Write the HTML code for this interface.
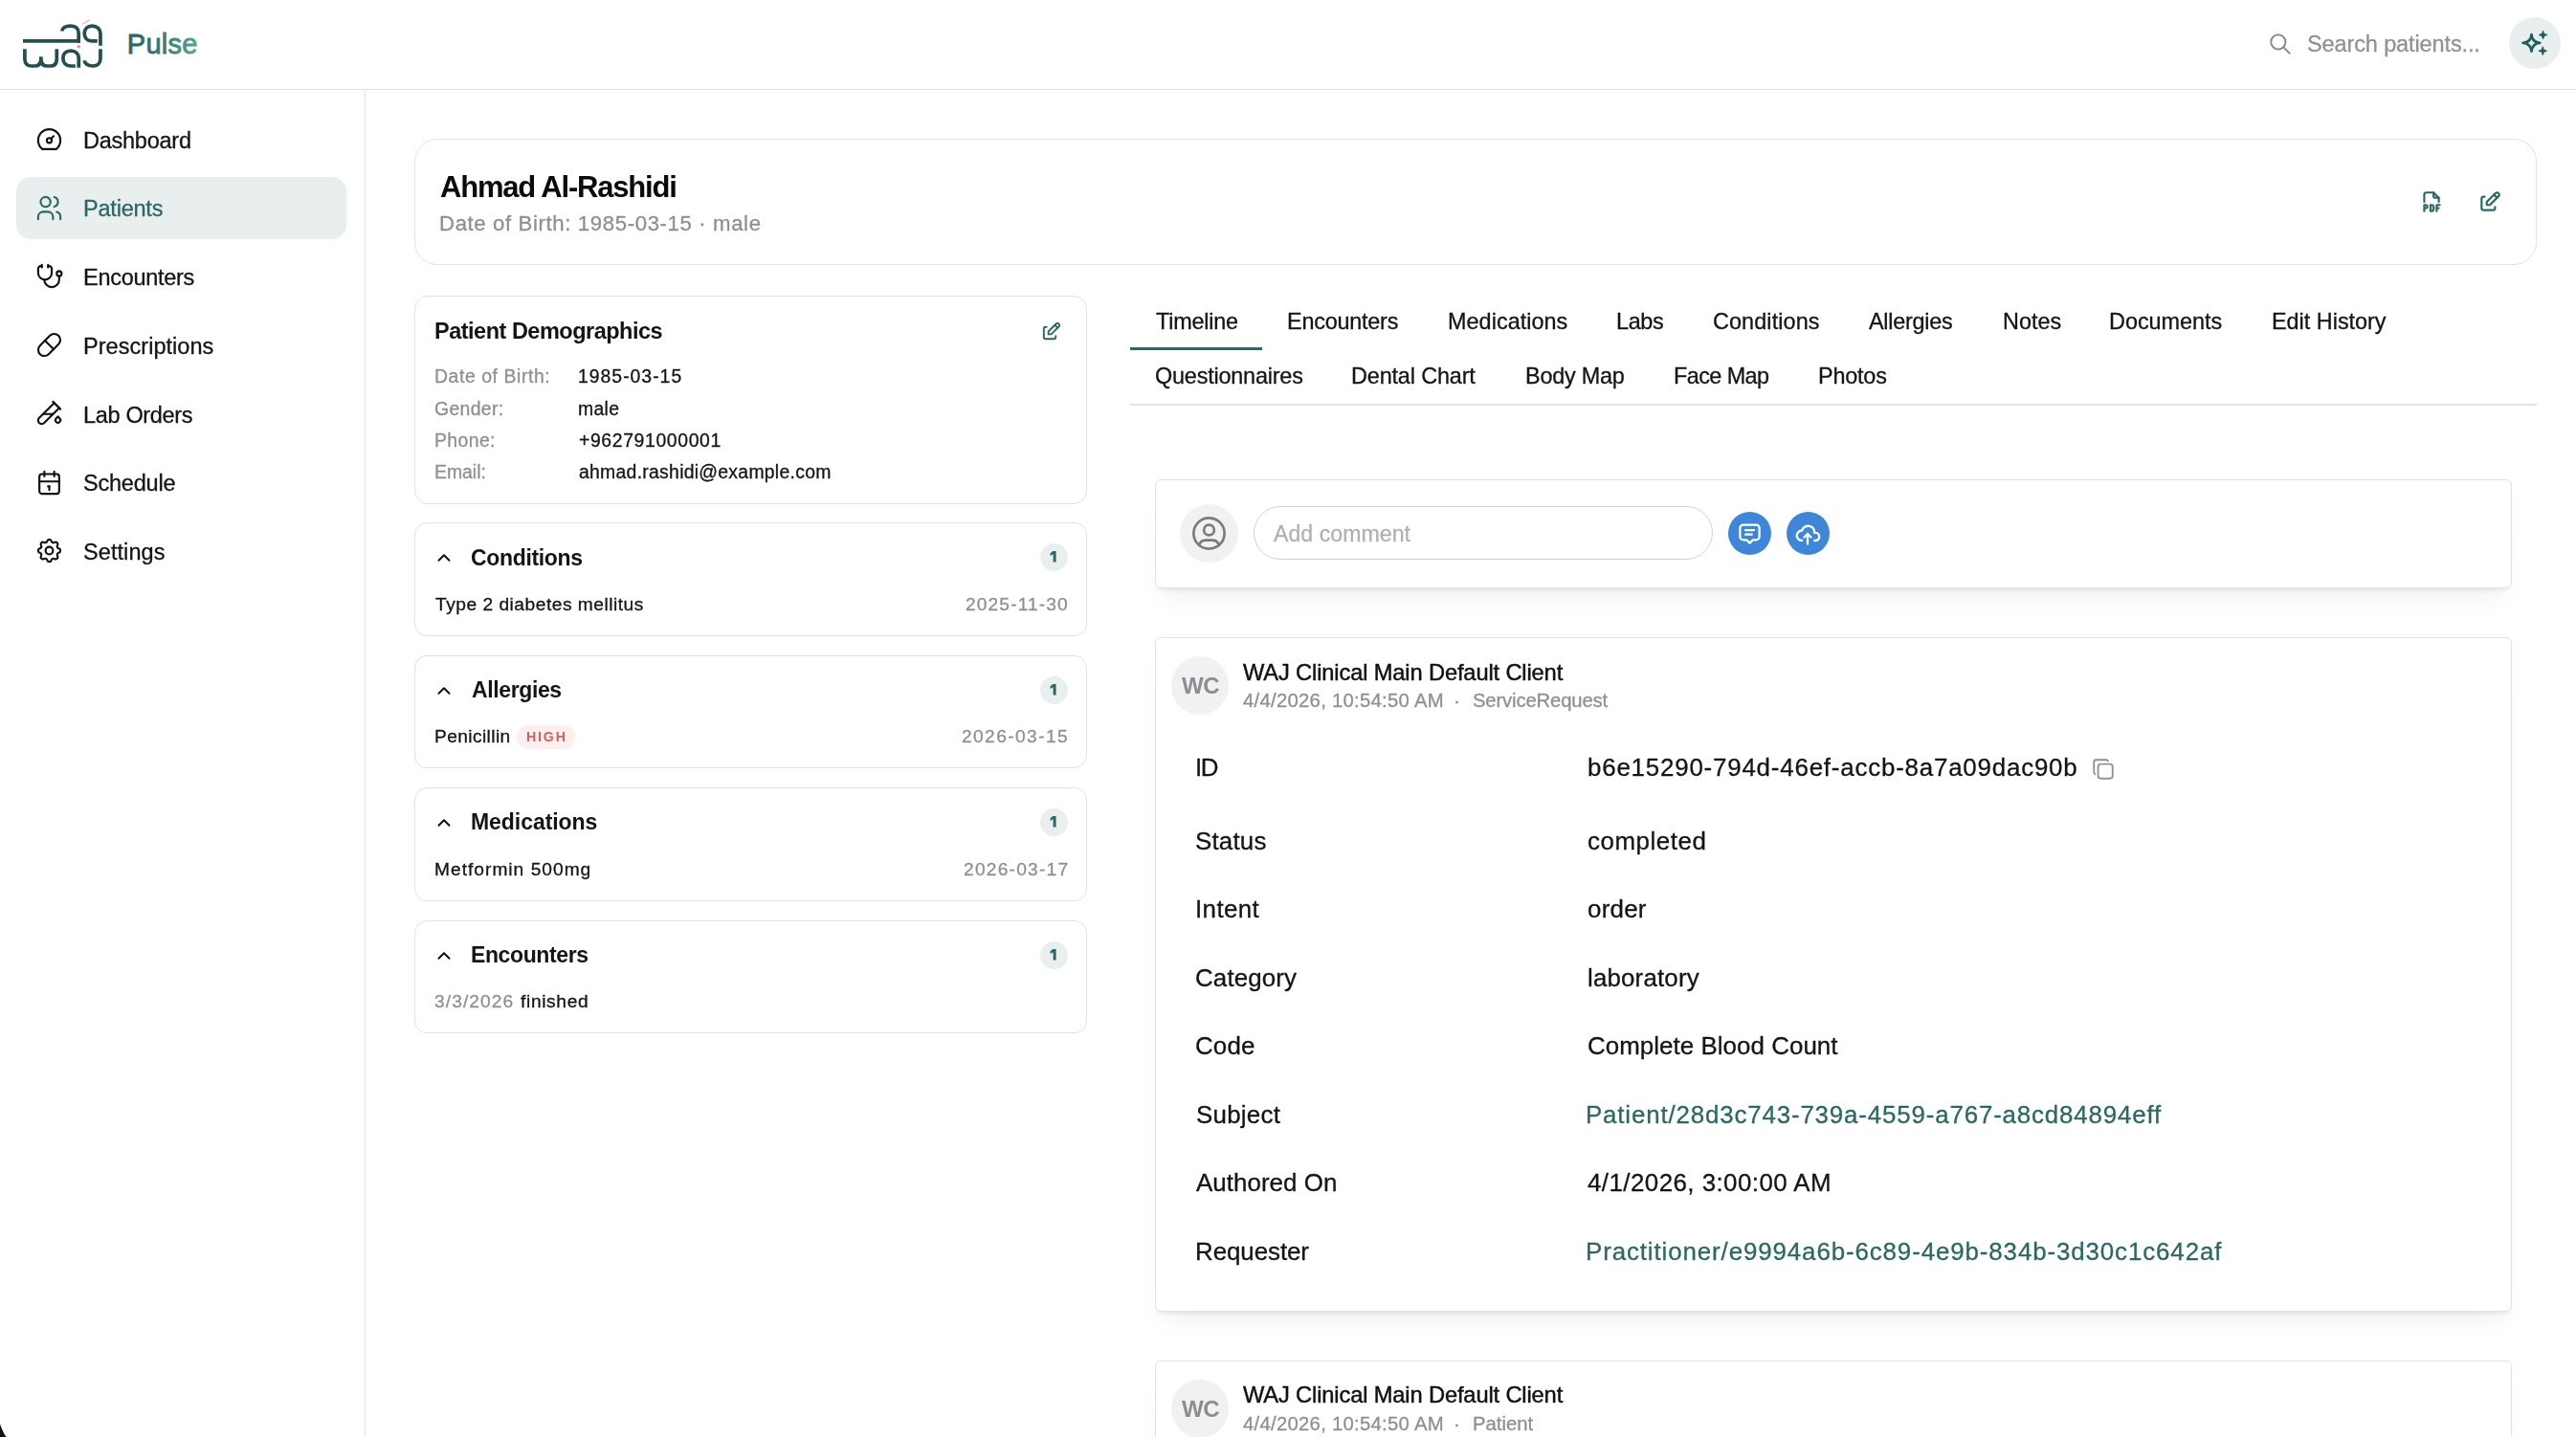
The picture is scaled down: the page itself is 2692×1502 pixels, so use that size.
<!DOCTYPE html>
<html><head><meta charset="utf-8"><title>Pulse</title><style>
*{box-sizing:border-box;margin:0;padding:0}
html,body{width:2692px;height:1502px;overflow:hidden;background:#fff}
body{position:relative;font-family:"Liberation Sans",sans-serif}
.abs,.t,.ic,.card{position:absolute}
.t{white-space:nowrap;will-change:transform}
.card{background:#fff;border:1px solid #e1e2e4}
.shadow{box-shadow:0 5px 5px -3px rgba(0,0,0,0.08),0 18px 28px -12px rgba(0,0,0,0.08)}
.badge{border-radius:50%;background:#e9efef;color:#2b6864;font-weight:700;font-size:17px;line-height:29px;text-align:center}
</style></head>
<body>
<div class="abs" style="left:0;top:93px;width:2692px;height:1px;background:#e0e2e4"></div>
<div class="abs" style="left:381px;top:94px;width:1px;height:1408px;background:#e0e2e4"></div>
<div class="abs" style="left:17px;top:185px;width:345px;height:65px;border-radius:15px;background:#e9eeef"></div>
<svg class="ic" style="left:16px;top:14px;width:100px;height:64px" viewBox="0 0 2245 1437" fill="none" stroke="#234f50" stroke-width="84" stroke-linecap="butt">
<path d="M180 650H1525"/>
<path d="M1100 418C1100 340 1180 292 1290 292C1410 292 1485 360 1485 450V690"/>
<path d="M1925 650H1800C1690 650 1622 570 1622 470C1622 360 1700 292 1800 292C1920 292 1997 370 1997 470V755"/>
<path d="M222 835V1070C222 1175 285 1235 380 1235H440C545 1235 602 1175 602 1070V1015"/>
<path d="M602 1070C602 1175 660 1235 760 1235H815C915 1235 972 1175 972 1070V835"/>
<path d="M1410 1235H1300C1190 1235 1120 1160 1120 1050C1120 940 1190 878 1300 878C1420 878 1488 950 1488 1050V1275"/>
<path d="M1997 835V1060C1997 1170 1930 1235 1820 1235C1700 1235 1622 1170 1622 1105"/>
<path d="M1575 255L1745 150" stroke="#e3909a" stroke-width="22"/>
<circle cx="1485" cy="780" r="38" fill="#e88f9a" stroke="none"/>
</svg>
<svg class="ic" style="left:120px;top:20px;width:100px;height:50px;overflow:visible" viewBox="0 0 100 50"><defs><linearGradient id="pg" x1="0" y1="0" x2="1" y2="0"><stop offset="0" stop-color="#29645f"/><stop offset="0.5" stop-color="#337c72"/><stop offset="1" stop-color="#52aa8d"/></linearGradient></defs><text x="12.8" y="36" font-family="Liberation Sans" font-size="29" letter-spacing="0.25" fill="url(#pg)" stroke="url(#pg)" stroke-width="0.85">Pulse</text></svg>
<svg class="ic" style="left:2369.70px;top:32.80px;width:26.00px;height:26.00px;" viewBox="0 0 24 24" fill="none" stroke="#8a8e93" stroke-width="1.85" stroke-linecap="round" stroke-linejoin="round"><path d="M10 10m-7 0a7 7 0 1 0 14 0a7 7 0 1 0 -14 0"/><path d="M21 21l-6 -6"/></svg>
<div class="abs" style="left:2622px;top:18px;width:54px;height:54px;border-radius:50%;background:#e9eeee"></div>
<svg class="ic" style="left:2622px;top:18px;width:54px;height:54px" viewBox="0 0 54 54" fill="none" stroke="#22605b" stroke-linejoin="round"><path stroke-width="2.9" d="M23.5 35.6A8.7 8.7 0 0 1 32.2 26.9A8.7 8.7 0 0 1 23.5 18.2A8.7 8.7 0 0 1 14.8 26.9A8.7 8.7 0 0 1 23.5 35.6Z"/><path fill="#22605b" stroke-width="1.6" d="M35.6 22.3A3.8 3.8 0 0 1 39.4 18.5A3.8 3.8 0 0 1 35.6 14.7A3.8 3.8 0 0 1 31.8 18.5A3.8 3.8 0 0 1 35.6 22.3Z"/><path fill="#22605b" stroke-width="1.6" d="M35.3 39A3.8 3.8 0 0 1 39.1 35.2A3.8 3.8 0 0 1 35.3 31.4A3.8 3.8 0 0 1 31.5 35.2A3.8 3.8 0 0 1 35.3 39Z"/></svg>
<svg class="ic" style="left:36.10px;top:129.90px;width:31.00px;height:31.00px;" viewBox="0 0 24 24" fill="none" stroke="#111" stroke-width="1.65" stroke-linecap="round" stroke-linejoin="round"><path d="M12 13m-2 0a2 2 0 1 0 4 0a2 2 0 1 0 -4 0"/><path d="M13.45 11.55l2.05 -2.05"/><path d="M6.4 20a9 9 0 1 1 11.2 0z"/></svg>
<svg class="ic" style="left:36.10px;top:201.65px;width:31.00px;height:31.00px;" viewBox="0 0 24 24" fill="none" stroke="#2b6864" stroke-width="1.65" stroke-linecap="round" stroke-linejoin="round"><path d="M9 7m-4 0a4 4 0 1 0 8 0a4 4 0 1 0 -8 0"/><path d="M3 21v-2a4 4 0 0 1 4 -4h4a4 4 0 0 1 4 4v2"/><path d="M16 3.13a4 4 0 0 1 0 7.75"/><path d="M21 21v-2a4 4 0 0 0 -3 -3.85"/></svg>
<svg class="ic" style="left:36.10px;top:273.40px;width:31.00px;height:31.00px;" viewBox="0 0 24 24" fill="none" stroke="#111" stroke-width="1.65" stroke-linecap="round" stroke-linejoin="round"><path d="M6 4h-1a2 2 0 0 0 -2 2v3.5h0a5.5 5.5 0 0 0 11 0v-3.5a2 2 0 0 0 -2 -2h-1"/><path d="M8 15a6 6 0 1 0 12 0v-3"/><path d="M11 3v2"/><path d="M6 3v2"/><path d="M20 10m-2 0a2 2 0 1 0 4 0a2 2 0 1 0 -4 0"/></svg>
<svg class="ic" style="left:36.10px;top:345.15px;width:31.00px;height:31.00px;" viewBox="0 0 24 24" fill="none" stroke="#111" stroke-width="1.65" stroke-linecap="round" stroke-linejoin="round"><path d="M4.5 12.5l8 -8a4.95 4.95 0 0 1 7 7l-8 8a4.95 4.95 0 0 1 -7 -7"/><path d="M8.5 8.5l7 7"/></svg>
<svg class="ic" style="left:36.10px;top:415.70px;width:31.00px;height:31.00px;" viewBox="0 0 24 24" fill="none" stroke="#111" stroke-width="1.65" stroke-linecap="round" stroke-linejoin="round"><path d="M20 8.04l-12.122 12.124a2.857 2.857 0 1 1 -4.041 -4.04l12.122 -12.124"/><path d="M7 13h8"/><path d="M19 15l1.5 1.6a2 2 0 1 1 -3 0l1.5 -1.6z"/><path d="M15 3l6 6"/></svg>
<svg class="ic" style="left:36.10px;top:488.65px;width:31.00px;height:31.00px;" viewBox="0 0 24 24" fill="none" stroke="#111" stroke-width="1.65" stroke-linecap="round" stroke-linejoin="round"><path d="M4 7a2 2 0 0 1 2 -2h12a2 2 0 0 1 2 2v12a2 2 0 0 1 -2 2h-12a2 2 0 0 1 -2 -2v-12z"/><path d="M16 3v4"/><path d="M8 3v4"/><path d="M4 11h16"/><path d="M11 15h1"/><path d="M12 15v3"/></svg>
<svg class="ic" style="left:36.10px;top:560.40px;width:31.00px;height:31.00px;" viewBox="0 0 24 24" fill="none" stroke="#111" stroke-width="1.65" stroke-linecap="round" stroke-linejoin="round"><path d="M10.325 4.317c.426 -1.756 2.924 -1.756 3.35 0a1.724 1.724 0 0 0 2.573 1.066c1.543 -.94 3.31 .826 2.37 2.37a1.724 1.724 0 0 0 1.065 2.572c1.756 .426 1.756 2.924 0 3.35a1.724 1.724 0 0 0 -1.066 2.573c.94 1.543 -.826 3.31 -2.37 2.37a1.724 1.724 0 0 0 -2.572 1.065c-.426 1.756 -2.924 1.756 -3.35 0a1.724 1.724 0 0 0 -2.573 -1.066c-1.543 .94 -3.31 -.826 -2.37 -2.37a1.724 1.724 0 0 0 -1.065 -2.572c-1.756 -.426 -1.756 -2.924 0 -3.35a1.724 1.724 0 0 0 1.066 -2.573c-.94 -1.543 .826 -3.31 2.37 -2.37c1 .608 2.296 .07 2.572 -1.065z"/><path d="M9 12a3 3 0 1 0 6 0a3 3 0 0 0 -6 0"/></svg>
<div class="card" style="left:433px;top:145px;width:2218px;height:132px;border-radius:24px"></div>
<svg class="ic" style="left:2528.00px;top:197.50px;width:26.00px;height:26.00px;" viewBox="0 0 24 24" fill="none" stroke="#2b6864" stroke-width="2" stroke-linecap="round" stroke-linejoin="round"><path d="M14 3v4a1 1 0 0 0 1 1h4"/><path d="M5 12v-7a2 2 0 0 1 2 -2h7l5 5v4"/><path d="M5 18h1.5a1.5 1.5 0 0 0 0 -3h-1.5v6"/><path d="M17 18h2"/><path d="M20 15h-3v6"/><path d="M11 15v6h1a2 2 0 0 0 2 -2v-2a2 2 0 0 0 -2 -2h-1z"/></svg>
<svg class="ic" style="left:2588.50px;top:197.80px;width:26.00px;height:26.00px;" viewBox="0 0 24 24" fill="none" stroke="#2b6864" stroke-width="2" stroke-linecap="round" stroke-linejoin="round"><path d="M7 7h-1a2 2 0 0 0 -2 2v9a2 2 0 0 0 2 2h9a2 2 0 0 0 2 -2v-1"/><path d="M20.385 6.585a2.1 2.1 0 0 0 -2.97 -2.97l-8.415 8.385v3h3l8.385 -8.415z"/><path d="M16 5l3 3"/></svg>
<div class="card" style="left:433px;top:309px;width:703px;height:218px;border-radius:14px"></div>
<svg class="ic" style="left:1086.50px;top:335.30px;width:23.00px;height:23.00px;" viewBox="0 0 24 24" fill="none" stroke="#2b6864" stroke-width="2" stroke-linecap="round" stroke-linejoin="round"><path d="M7 7h-1a2 2 0 0 0 -2 2v9a2 2 0 0 0 2 2h9a2 2 0 0 0 2 -2v-1"/><path d="M20.385 6.585a2.1 2.1 0 0 0 -2.97 -2.97l-8.415 8.385v3h3l8.385 -8.415z"/><path d="M16 5l3 3"/></svg>
<div class="card" style="left:433px;top:546.0px;width:703px;height:118.5px;border-radius:13px"></div>
<svg class="ic" style="left:452.50px;top:572.00px;width:22.00px;height:22.00px;" viewBox="0 0 24 24" fill="none" stroke="#111" stroke-width="2.2" stroke-linecap="round" stroke-linejoin="round"><path d="M6 15l6 -6l6 6"/></svg>
<div class="abs badge" style="left:1087.4px;top:568.2px;width:29px;height:29px"><svg width="29" height="29" viewBox="0 0 29 29" style="display:block"><path d="M13.3 7.9H16.6V19.6H13.6V11.2L10.6 13.1V10.2Z" fill="#2b6864"/></svg></div>
<div class="card" style="left:433px;top:684.5px;width:703px;height:118.5px;border-radius:13px"></div>
<svg class="ic" style="left:452.50px;top:710.50px;width:22.00px;height:22.00px;" viewBox="0 0 24 24" fill="none" stroke="#111" stroke-width="2.2" stroke-linecap="round" stroke-linejoin="round"><path d="M6 15l6 -6l6 6"/></svg>
<div class="abs badge" style="left:1087.4px;top:706.7px;width:29px;height:29px"><svg width="29" height="29" viewBox="0 0 29 29" style="display:block"><path d="M13.3 7.9H16.6V19.6H13.6V11.2L10.6 13.1V10.2Z" fill="#2b6864"/></svg></div>
<div class="card" style="left:433px;top:823.0px;width:703px;height:118.5px;border-radius:13px"></div>
<svg class="ic" style="left:452.50px;top:849.00px;width:22.00px;height:22.00px;" viewBox="0 0 24 24" fill="none" stroke="#111" stroke-width="2.2" stroke-linecap="round" stroke-linejoin="round"><path d="M6 15l6 -6l6 6"/></svg>
<div class="abs badge" style="left:1087.4px;top:845.2px;width:29px;height:29px"><svg width="29" height="29" viewBox="0 0 29 29" style="display:block"><path d="M13.3 7.9H16.6V19.6H13.6V11.2L10.6 13.1V10.2Z" fill="#2b6864"/></svg></div>
<div class="card" style="left:433px;top:961.5px;width:703px;height:118.5px;border-radius:13px"></div>
<svg class="ic" style="left:452.50px;top:987.50px;width:22.00px;height:22.00px;" viewBox="0 0 24 24" fill="none" stroke="#111" stroke-width="2.2" stroke-linecap="round" stroke-linejoin="round"><path d="M6 15l6 -6l6 6"/></svg>
<div class="abs badge" style="left:1087.4px;top:983.7px;width:29px;height:29px"><svg width="29" height="29" viewBox="0 0 29 29" style="display:block"><path d="M13.3 7.9H16.6V19.6H13.6V11.2L10.6 13.1V10.2Z" fill="#2b6864"/></svg></div>
<div class="abs" style="left:540.4px;top:757.6px;width:61px;height:25px;border-radius:12px;background:#fcefef"></div>
<div class="abs" style="left:1181px;top:422px;width:1470px;height:2px;background:#e2e5e7"></div>
<div class="abs" style="left:1181px;top:362.8px;width:137.8px;height:3.2px;background:#2b6864"></div>
<div class="card shadow" style="left:1207.3px;top:501.2px;width:1418px;height:113.5px;border-radius:6px"></div>
<div class="abs" style="left:1233.2px;top:527px;width:61px;height:61px;border-radius:50%;background:#f1f1f1"></div>
<svg class="ic" style="left:1242.20px;top:535.90px;width:43.00px;height:43.00px;" viewBox="0 0 24 24" fill="none" stroke="#7b7b7b" stroke-width="1.5" stroke-linecap="round" stroke-linejoin="round"><path d="M12 12m-9 0a9 9 0 1 0 18 0a9 9 0 1 0 -18 0"/><path d="M12 10m-3 0a3 3 0 1 0 6 0a3 3 0 1 0 -6 0"/><path d="M6.168 18.849a4 4 0 0 1 3.832 -2.849h4a4 4 0 0 1 3.834 2.855"/></svg>
<div class="abs" style="left:1310px;top:529.3px;width:480px;height:56px;border-radius:28px;border:1.5px solid #cfd2d5;background:#fff"></div>
<div class="abs" style="left:1806.2px;top:534.7px;width:45px;height:45px;border-radius:50%;background:#3d86d9"></div>
<svg class="ic" style="left:1815.20px;top:543.70px;width:27.00px;height:27.00px;" viewBox="0 0 24 24" fill="none" stroke="#fff" stroke-width="2" stroke-linecap="round" stroke-linejoin="round"><path d="M8 9h8"/><path d="M8 13h6"/><path d="M9 18h-3a3 3 0 0 1 -3 -3v-8a3 3 0 0 1 3 -3h12a3 3 0 0 1 3 3v8a3 3 0 0 1 -3 3h-3l-3 3l-3 -3z"/></svg>
<div class="abs" style="left:1866.9px;top:534.7px;width:45px;height:45px;border-radius:50%;background:#3d86d9"></div>
<svg class="ic" style="left:1875.40px;top:543.70px;width:28.00px;height:28.00px;" viewBox="0 0 24 24" fill="none" stroke="#fff" stroke-width="2" stroke-linecap="round" stroke-linejoin="round"><path d="M7 18a4.6 4.4 0 0 1 0 -9a5 4.5 0 0 1 11 2h1a3.5 3.5 0 0 1 0 7h-1"/><path d="M9 15l3 -3l3 3"/><path d="M12 12l0 9"/></svg>
<div class="card shadow" style="left:1207.3px;top:666px;width:1418px;height:705px;border-radius:6px"></div>
<div class="abs" style="left:1223.6px;top:686px;width:60.5px;height:60.5px;border-radius:50%;background:#f1f1f1"></div>
<svg class="ic" style="left:2185.00px;top:790.80px;width:26.00px;height:26.00px;" viewBox="0 0 24 24" fill="none" stroke="#8f9398" stroke-width="1.75" stroke-linecap="round" stroke-linejoin="round"><path d="M7 9.667a2.667 2.667 0 0 1 2.667 -2.667h8.666a2.667 2.667 0 0 1 2.667 2.667v8.666a2.667 2.667 0 0 1 -2.667 2.667h-8.666a2.667 2.667 0 0 1 -2.667 -2.667z"/><path d="M4.012 16.737a2.005 2.005 0 0 1 -1.012 -1.737v-10c0 -1.1 .9 -2 2 -2h10c.75 0 1.158 .385 1.5 1"/></svg>
<div class="card shadow" style="left:1207.3px;top:1422px;width:1418px;height:200px;border-radius:6px"></div>
<div class="abs" style="left:1223.6px;top:1442px;width:60.5px;height:60.5px;border-radius:50%;background:#f1f1f1"></div>
<svg class="ic" style="left:0;top:1480px;width:20px;height:22px" viewBox="0 0 20 22"><path d="M0 8.5C2 14 4 18.5 6.5 22H0Z" fill="#111"/></svg>
<div id="search" class="t" style="left:2411.40px;top:34.81px;font-size:23.50px;line-height:23.50px;font-weight:400;color:#8e9297;letter-spacing:-0.118px;-webkit-text-stroke:0.30px #8e9297;">Search patients...</div>
<div id="nav0" class="t" style="left:87.20px;top:135.61px;font-size:23.50px;line-height:23.50px;font-weight:400;color:#141414;letter-spacing:-0.250px;-webkit-text-stroke:0.30px #141414;">Dashboard</div>
<div id="nav1" class="t" style="left:87.20px;top:207.36px;font-size:23.50px;line-height:23.50px;font-weight:400;color:#2b6864;letter-spacing:-0.215px;-webkit-text-stroke:0.30px #2b6864;">Patients</div>
<div id="nav2" class="t" style="left:87.20px;top:279.11px;font-size:23.50px;line-height:23.50px;font-weight:400;color:#141414;letter-spacing:-0.278px;-webkit-text-stroke:0.30px #141414;">Encounters</div>
<div id="nav3" class="t" style="left:87.20px;top:350.86px;font-size:23.50px;line-height:23.50px;font-weight:400;color:#141414;letter-spacing:0.041px;-webkit-text-stroke:0.30px #141414;">Prescriptions</div>
<div id="nav4" class="t" style="left:87.20px;top:422.61px;font-size:23.50px;line-height:23.50px;font-weight:400;color:#141414;letter-spacing:-0.332px;-webkit-text-stroke:0.30px #141414;">Lab Orders</div>
<div id="nav5" class="t" style="left:87.20px;top:494.36px;font-size:23.50px;line-height:23.50px;font-weight:400;color:#141414;letter-spacing:-0.215px;-webkit-text-stroke:0.30px #141414;">Schedule</div>
<div id="nav6" class="t" style="left:87.20px;top:566.11px;font-size:23.50px;line-height:23.50px;font-weight:400;color:#141414;letter-spacing:0.073px;-webkit-text-stroke:0.30px #141414;">Settings</div>
<div id="name" class="t" style="left:460.00px;top:180.46px;font-size:31.00px;line-height:31.00px;font-weight:700;color:#0b0b0b;letter-spacing:-1.201px;">Ahmad Al-Rashidi</div>
<div id="dob" class="t" style="left:459.00px;top:223.21px;font-size:22.20px;line-height:22.20px;font-weight:400;color:#8c9095;letter-spacing:0.614px;-webkit-text-stroke:0.30px #8c9095;">Date of Birth: 1985-03-15 · male</div>
<div id="demo_t" class="t" style="left:453.50px;top:334.81px;font-size:23.50px;line-height:23.50px;font-weight:700;color:#141414;letter-spacing:-0.499px;">Patient Demographics</div>
<div id="dl0" class="t" style="left:453.50px;top:383.98px;font-size:19.40px;line-height:19.40px;font-weight:400;color:#8c9095;letter-spacing:0.576px;-webkit-text-stroke:0.30px #8c9095;">Date of Birth:</div>
<div id="dv0" class="t" style="left:603.70px;top:383.98px;font-size:19.40px;line-height:19.40px;font-weight:400;color:#141414;letter-spacing:0.998px;-webkit-text-stroke:0.30px #141414;">1985-03-15</div>
<div id="dl1" class="t" style="left:453.50px;top:417.68px;font-size:19.40px;line-height:19.40px;font-weight:400;color:#8c9095;letter-spacing:0.333px;-webkit-text-stroke:0.30px #8c9095;">Gender:</div>
<div id="dv1" class="t" style="left:603.70px;top:417.68px;font-size:19.40px;line-height:19.40px;font-weight:400;color:#141414;letter-spacing:0.333px;-webkit-text-stroke:0.30px #141414;">male</div>
<div id="dl2" class="t" style="left:453.50px;top:450.58px;font-size:19.40px;line-height:19.40px;font-weight:400;color:#8c9095;letter-spacing:0.400px;-webkit-text-stroke:0.30px #8c9095;">Phone:</div>
<div id="dv2" class="t" style="left:604.70px;top:450.58px;font-size:19.40px;line-height:19.40px;font-weight:400;color:#141414;letter-spacing:0.626px;-webkit-text-stroke:0.30px #141414;">+962791000001</div>
<div id="dl3" class="t" style="left:453.50px;top:483.78px;font-size:19.40px;line-height:19.40px;font-weight:400;color:#8c9095;letter-spacing:0.000px;-webkit-text-stroke:0.30px #8c9095;">Email:</div>
<div id="dv3" class="t" style="left:604.70px;top:483.78px;font-size:19.40px;line-height:19.40px;font-weight:400;color:#141414;letter-spacing:0.273px;-webkit-text-stroke:0.30px #141414;">ahmad.rashidi@example.com</div>
<div id="st0" class="t" style="left:491.80px;top:572.33px;font-size:23.00px;line-height:23.00px;font-weight:700;color:#141414;letter-spacing:-0.334px;">Conditions</div>
<div id="st1" class="t" style="left:492.80px;top:709.63px;font-size:23.00px;line-height:23.00px;font-weight:700;color:#141414;letter-spacing:-0.375px;">Allergies</div>
<div id="st2" class="t" style="left:491.80px;top:848.23px;font-size:23.00px;line-height:23.00px;font-weight:700;color:#141414;letter-spacing:-0.050px;">Medications</div>
<div id="st3" class="t" style="left:491.80px;top:986.53px;font-size:23.00px;line-height:23.00px;font-weight:700;color:#141414;letter-spacing:-0.389px;">Encounters</div>
<div id="si0" class="t" style="left:454.50px;top:621.95px;font-size:19.20px;line-height:19.20px;font-weight:400;color:#141414;letter-spacing:0.500px;-webkit-text-stroke:0.30px #141414;">Type 2 diabetes mellitus</div>
<div id="sd0" class="t" style="left:1008.90px;top:621.95px;font-size:19.20px;line-height:19.20px;font-weight:400;color:#8c9095;letter-spacing:1.113px;-webkit-text-stroke:0.30px #8c9095;">2025-11-30</div>
<div id="si1" class="t" style="left:453.50px;top:760.15px;font-size:19.20px;line-height:19.20px;font-weight:400;color:#141414;letter-spacing:0.390px;-webkit-text-stroke:0.30px #141414;">Penicillin</div>
<div id="high" class="t" style="left:549.50px;top:763.28px;font-size:14.20px;line-height:14.20px;font-weight:700;color:#d9605c;letter-spacing:1.832px;">HIGH</div>
<div id="sd1" class="t" style="left:1005.00px;top:760.15px;font-size:19.20px;line-height:19.20px;font-weight:400;color:#8c9095;letter-spacing:1.390px;-webkit-text-stroke:0.30px #8c9095;">2026-03-15</div>
<div id="si2" class="t" style="left:453.50px;top:898.55px;font-size:19.20px;line-height:19.20px;font-weight:400;color:#141414;letter-spacing:1.000px;-webkit-text-stroke:0.30px #141414;">Metformin 500mg</div>
<div id="sd2" class="t" style="left:1006.50px;top:898.55px;font-size:19.20px;line-height:19.20px;font-weight:400;color:#8c9095;letter-spacing:1.224px;-webkit-text-stroke:0.30px #8c9095;">2026-03-17</div>
<div id="si3a" class="t" style="left:453.50px;top:1037.05px;font-size:19.20px;line-height:19.20px;font-weight:400;color:#8c9095;letter-spacing:1.070px;-webkit-text-stroke:0.30px #8c9095;">3/3/2026</div>
<div id="si3b" class="t" style="left:544.00px;top:1037.05px;font-size:19.20px;line-height:19.20px;font-weight:400;color:#141414;letter-spacing:0.643px;-webkit-text-stroke:0.30px #141414;">finished</div>
<div id="tab1_0" class="t" style="left:1207.50px;top:324.79px;font-size:23.40px;line-height:23.40px;font-weight:400;color:#141414;letter-spacing:-0.215px;-webkit-text-stroke:0.30px #141414;">Timeline</div>
<div id="tab1_1" class="t" style="left:1344.70px;top:324.79px;font-size:23.40px;line-height:23.40px;font-weight:400;color:#141414;letter-spacing:-0.222px;-webkit-text-stroke:0.30px #141414;">Encounters</div>
<div id="tab1_2" class="t" style="left:1512.90px;top:324.79px;font-size:23.40px;line-height:23.40px;font-weight:400;color:#141414;letter-spacing:0.050px;-webkit-text-stroke:0.30px #141414;">Medications</div>
<div id="tab1_3" class="t" style="left:1688.90px;top:324.79px;font-size:23.40px;line-height:23.40px;font-weight:400;color:#141414;letter-spacing:-0.334px;-webkit-text-stroke:0.30px #141414;">Labs</div>
<div id="tab1_4" class="t" style="left:1789.80px;top:324.79px;font-size:23.40px;line-height:23.40px;font-weight:400;color:#141414;letter-spacing:0.112px;-webkit-text-stroke:0.30px #141414;">Conditions</div>
<div id="tab1_5" class="t" style="left:1953.20px;top:324.79px;font-size:23.40px;line-height:23.40px;font-weight:400;color:#141414;letter-spacing:-0.250px;-webkit-text-stroke:0.30px #141414;">Allergies</div>
<div id="tab1_6" class="t" style="left:2092.50px;top:324.79px;font-size:23.40px;line-height:23.40px;font-weight:400;color:#141414;letter-spacing:-0.000px;-webkit-text-stroke:0.30px #141414;">Notes</div>
<div id="tab1_7" class="t" style="left:2203.80px;top:324.79px;font-size:23.40px;line-height:23.40px;font-weight:400;color:#141414;letter-spacing:-0.000px;-webkit-text-stroke:0.30px #141414;">Documents</div>
<div id="tab1_8" class="t" style="left:2374.00px;top:324.79px;font-size:23.40px;line-height:23.40px;font-weight:400;color:#141414;letter-spacing:-0.002px;-webkit-text-stroke:0.30px #141414;">Edit History</div>
<div id="tab2_0" class="t" style="left:1206.50px;top:381.79px;font-size:23.40px;line-height:23.40px;font-weight:400;color:#141414;letter-spacing:-0.192px;-webkit-text-stroke:0.30px #141414;">Questionnaires</div>
<div id="tab2_1" class="t" style="left:1412.40px;top:381.79px;font-size:23.40px;line-height:23.40px;font-weight:400;color:#141414;letter-spacing:-0.135px;-webkit-text-stroke:0.30px #141414;">Dental Chart</div>
<div id="tab2_2" class="t" style="left:1593.70px;top:381.79px;font-size:23.40px;line-height:23.40px;font-weight:400;color:#141414;letter-spacing:-0.214px;-webkit-text-stroke:0.30px #141414;">Body Map</div>
<div id="tab2_3" class="t" style="left:1748.90px;top:381.79px;font-size:23.40px;line-height:23.40px;font-weight:400;color:#141414;letter-spacing:-0.572px;-webkit-text-stroke:0.30px #141414;">Face Map</div>
<div id="tab2_4" class="t" style="left:1900.00px;top:381.79px;font-size:23.40px;line-height:23.40px;font-weight:400;color:#141414;letter-spacing:-0.200px;-webkit-text-stroke:0.30px #141414;">Photos</div>
<div id="addc" class="t" style="left:1331.00px;top:546.95px;font-size:23.10px;line-height:23.10px;font-weight:400;color:#aeb1b5;letter-spacing:0.050px;-webkit-text-stroke:0.30px #aeb1b5;">Add comment</div>
<div id="wc1" class="t" style="left:1234.60px;top:704.90px;font-size:24.10px;line-height:24.10px;font-weight:700;color:#8a8e93;letter-spacing:-0.500px;">WC</div>
<div id="tt1" class="t" style="left:1298.50px;top:691.54px;font-size:23.70px;line-height:23.70px;font-weight:400;color:#111;letter-spacing:-0.146px;-webkit-text-stroke:0.45px #111;">WAJ Clinical Main Default Client</div>
<div id="ts1a" class="t" style="left:1298.50px;top:722.32px;font-size:20.30px;line-height:20.30px;font-weight:400;color:#8c9095;letter-spacing:0.275px;-webkit-text-stroke:0.30px #8c9095;">4/4/2026, 10:54:50 AM</div>
<div id="ts1dot" class="t" style="left:1519.40px;top:722.32px;font-size:20.30px;line-height:20.30px;font-weight:400;color:#8c9095;-webkit-text-stroke:0.30px #8c9095;">·</div>
<div id="ts1b" class="t" style="left:1538.50px;top:722.32px;font-size:20.30px;line-height:20.30px;font-weight:400;color:#8c9095;letter-spacing:-0.155px;-webkit-text-stroke:0.30px #8c9095;">ServiceRequest</div>
<div id="rl0" class="t" style="left:1248.50px;top:789.68px;font-size:25.90px;line-height:25.90px;font-weight:400;color:#141414;letter-spacing:-1.500px;-webkit-text-stroke:0.30px #141414;">ID</div>
<div id="rv0" class="t" style="left:1658.80px;top:789.68px;font-size:25.90px;line-height:25.90px;font-weight:400;color:#141414;letter-spacing:0.800px;-webkit-text-stroke:0.30px #141414;">b6e15290-794d-46ef-accb-8a7a09dac90b</div>
<div id="rl1" class="t" style="left:1248.50px;top:866.58px;font-size:25.90px;line-height:25.90px;font-weight:400;color:#141414;letter-spacing:0.200px;-webkit-text-stroke:0.30px #141414;">Status</div>
<div id="rv1" class="t" style="left:1659.30px;top:866.58px;font-size:25.90px;line-height:25.90px;font-weight:400;color:#141414;letter-spacing:0.560px;-webkit-text-stroke:0.30px #141414;">completed</div>
<div id="rl2" class="t" style="left:1248.50px;top:937.88px;font-size:25.90px;line-height:25.90px;font-weight:400;color:#141414;letter-spacing:0.400px;-webkit-text-stroke:0.30px #141414;">Intent</div>
<div id="rv2" class="t" style="left:1659.30px;top:937.88px;font-size:25.90px;line-height:25.90px;font-weight:400;color:#141414;letter-spacing:0.250px;-webkit-text-stroke:0.30px #141414;">order</div>
<div id="rl3" class="t" style="left:1248.50px;top:1009.58px;font-size:25.90px;line-height:25.90px;font-weight:400;color:#141414;letter-spacing:0.144px;-webkit-text-stroke:0.30px #141414;">Category</div>
<div id="rv3" class="t" style="left:1659.30px;top:1009.58px;font-size:25.90px;line-height:25.90px;font-weight:400;color:#141414;letter-spacing:0.166px;-webkit-text-stroke:0.30px #141414;">laboratory</div>
<div id="rl4" class="t" style="left:1248.50px;top:1081.38px;font-size:25.90px;line-height:25.90px;font-weight:400;color:#141414;letter-spacing:0.168px;-webkit-text-stroke:0.30px #141414;">Code</div>
<div id="rv4" class="t" style="left:1659.30px;top:1081.38px;font-size:25.90px;line-height:25.90px;font-weight:400;color:#141414;letter-spacing:0.053px;-webkit-text-stroke:0.30px #141414;">Complete Blood Count</div>
<div id="rl5" class="t" style="left:1249.50px;top:1152.88px;font-size:25.90px;line-height:25.90px;font-weight:400;color:#141414;letter-spacing:0.249px;-webkit-text-stroke:0.30px #141414;">Subject</div>
<div id="rv5" class="t" style="left:1657.30px;top:1152.88px;font-size:25.90px;line-height:25.90px;font-weight:400;color:#2b6864;letter-spacing:0.837px;-webkit-text-stroke:0.30px #2b6864;">Patient/28d3c743-739a-4559-a767-a8cd84894eff</div>
<div id="rl6" class="t" style="left:1249.50px;top:1224.38px;font-size:25.90px;line-height:25.90px;font-weight:400;color:#141414;letter-spacing:0.050px;-webkit-text-stroke:0.30px #141414;">Authored On</div>
<div id="rv6" class="t" style="left:1659.30px;top:1224.38px;font-size:25.90px;line-height:25.90px;font-weight:400;color:#141414;letter-spacing:0.447px;-webkit-text-stroke:0.30px #141414;">4/1/2026, 3:00:00 AM</div>
<div id="rl7" class="t" style="left:1248.50px;top:1296.28px;font-size:25.90px;line-height:25.90px;font-weight:400;color:#141414;letter-spacing:-0.060px;-webkit-text-stroke:0.30px #141414;">Requester</div>
<div id="rv7" class="t" style="left:1657.30px;top:1296.28px;font-size:25.90px;line-height:25.90px;font-weight:400;color:#2b6864;letter-spacing:0.887px;-webkit-text-stroke:0.30px #2b6864;">Practitioner/e9994a6b-6c89-4e9b-834b-3d30c1c642af</div>
<div id="wc2" class="t" style="left:1234.60px;top:1460.60px;font-size:24.10px;line-height:24.10px;font-weight:700;color:#8a8e93;letter-spacing:-0.500px;">WC</div>
<div id="tt2" class="t" style="left:1298.50px;top:1447.24px;font-size:23.70px;line-height:23.70px;font-weight:400;color:#111;letter-spacing:-0.146px;-webkit-text-stroke:0.45px #111;">WAJ Clinical Main Default Client</div>
<div id="ts2a" class="t" style="left:1298.50px;top:1478.32px;font-size:20.30px;line-height:20.30px;font-weight:400;color:#8c9095;letter-spacing:0.275px;-webkit-text-stroke:0.30px #8c9095;">4/4/2026, 10:54:50 AM</div>
<div id="ts2dot" class="t" style="left:1519.40px;top:1478.32px;font-size:20.30px;line-height:20.30px;font-weight:400;color:#8c9095;-webkit-text-stroke:0.30px #8c9095;">·</div>
<div id="ts2b" class="t" style="left:1538.50px;top:1478.32px;font-size:20.30px;line-height:20.30px;font-weight:400;color:#8c9095;letter-spacing:-0.001px;-webkit-text-stroke:0.30px #8c9095;">Patient</div>
</body></html>
